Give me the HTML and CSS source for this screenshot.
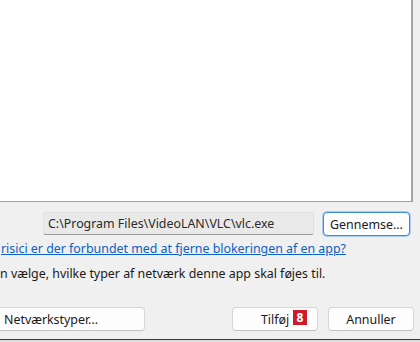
FILE: index.html
```html
<!DOCTYPE html>
<html>
	<head>
		<title>Tillad en app</title>
		<link rel="stylesheet" href="styles.css">
	</head>
<body>
	<div class="dialog">
		<!-- The (empty) app list -->
		<div class="applist"></div>

		<div class="pathrow">
			<div class="pathbox">C:\Program Files\VideoLAN\VLC\vlc.exe</div>
			<button class="btn btn-focus browse">Gennemse...</button>
		</div>

		<a class="risklink" href="#">risici er der forbundet med at fjerne blokeringen af en app?</a>
		<p class="hint">n vælge, hvilke typer af netværk denne app skal føjes til.</p>

		<div class="buttons">
			<button class="btn nettypes">Netværkstyper...</button>
			<div class="right">
				<button class="btn add">Tilføj<span class="badge">8</span></button>
				<button class="btn cancel">Annuller</button>
			</div>
		</div>
	</div>
	<div class="edge"></div>
</body>
</html>
```
FILE: styles.css
```css
body {
	margin: 0px;
	padding: 0px;
	width: 420px;
	height: 342px;
	overflow: hidden;
	background-color: #f0f0f0;
	font-family: 'Noto Sans', 'Open Sans', sans-serif;
	font-size: 12.4px;
	color: #1a1a1a;
}
.dialog {
	height: 339px;
	display: flex;
	flex-direction: column;
}
.applist {
	width: 411px;
	height: 201px;
	background-color: #fff;
	border-right: 2px solid #a6a6a6;
	border-bottom: 1px solid #a0a0a0;
	flex-shrink: 0;
}
.pathrow {
	display: flex;
	gap: 9px;
	margin-top: 10px;
	padding-left: 43px;
	height: 24px;
}
.pathbox {
	width: 271px;
	height: 23px;
	line-height: 22px;
	padding-left: 4px;
	box-sizing: border-box;
	background-color: #e9e9e9;
	border: 1px solid #e0e0e0;
	border-bottom: 1px solid #9a9a9a;
	border-radius: 3px;
	color: #2b2b2b;
	white-space: nowrap;
}
.btn {
	height: 24px;
	box-sizing: border-box;
	background-color: #fdfdfd;
	border: 1px solid #d6d6d6;
	border-bottom-color: #c2c2c2;
	border-radius: 4px;
	font-family: inherit;
	font-size: 12.4px;
	color: #1a1a1a;
	padding: 0px;
}
.btn-focus {
	border: 1px solid #3c8dd4;
	box-shadow: 0 0 0 1px #a9cdef;
}
.browse {
	width: 87px;
}
.risklink {
	margin-top: 5px;
	margin-left: 1px;
	line-height: 16px;
	color: #0b62c4;
	text-decoration: underline;
	white-space: nowrap;
}
.hint {
	margin: 9px 0px 0px 0px;
	line-height: 16px;
	white-space: nowrap;
}
.buttons {
	display: flex;
	justify-content: space-between;
	margin-top: 25px;
	margin-left: -36px;
	padding-right: 6px;
}
.nettypes {
	width: 181px;
	text-align: left;
	padding-left: 39px;
}
.right {
	display: flex;
	gap: 10px;
}
.add {
	width: 86px;
	position: relative;
}
.cancel {
	width: 86px;
}
.badge {
	position: absolute;
	left: 60px;
	top: 2px;
	width: 14px;
	height: 15px;
	line-height: 15px;
	background-color: #cc1b2b;
	color: #fff;
	font-weight: bold;
	font-size: 12px;
	text-align: center;
}
.edge {
	height: 3px;
	border-top: 1px solid #3a3a3a;
	background-color: #dcdcdc;
}
```
